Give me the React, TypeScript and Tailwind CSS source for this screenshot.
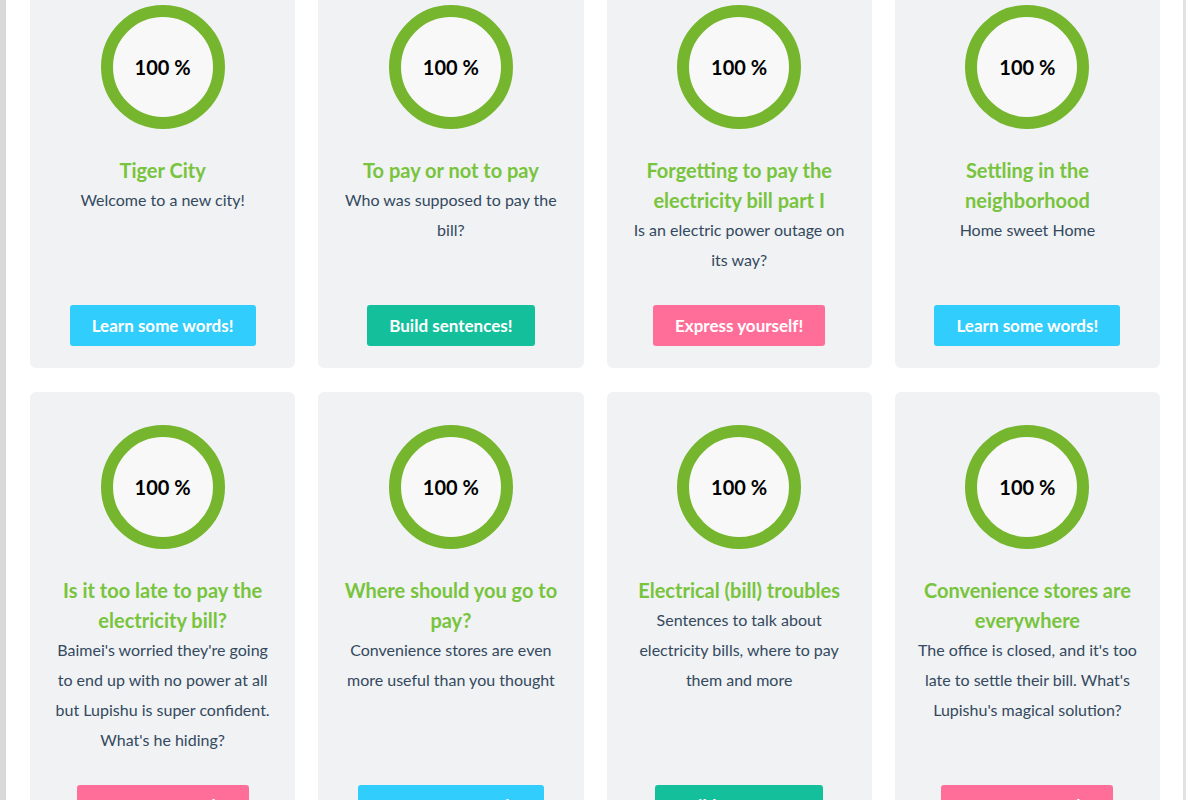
import React from 'react';

type Lesson = {
  title: string;
  text: string;
  action: 'learn' | 'build' | 'express';
};

const lessons: Lesson[] = [
  { title: 'Tiger City', text: 'Welcome to a new city!', action: 'learn' },
  { title: 'To pay or not to pay', text: 'Who was supposed to pay the bill?', action: 'build' },
  { title: 'Forgetting to pay the electricity bill part I', text: 'Is an electric power outage on its way?', action: 'express' },
  { title: 'Settling in the neighborhood', text: 'Home sweet Home', action: 'learn' },
  {
    title: 'Is it too late to pay the electricity bill?',
    text: "Baimei's worried they're going to end up with no power at all but Lupishu is super confident. What's he hiding?",
    action: 'express',
  },
  { title: 'Where should you go to pay?', text: 'Convenience stores are even more useful than you thought', action: 'learn' },
  { title: 'Electrical (bill) troubles', text: 'Sentences to talk about electricity bills, where to pay them and more', action: 'build' },
  {
    title: 'Convenience stores are everywhere',
    text: "The office is closed, and it's too late to settle their bill. What's Lupishu's magical solution?",
    action: 'express',
  },
];

const buttons = {
  learn: { label: 'Learn some words!', cls: 'bg-[#31cdfc]' },
  build: { label: 'Build sentences!', cls: 'bg-[#14bf9c]' },
  express: { label: 'Express yourself!', cls: 'bg-[#ff6e99]' },
};

const Progress = () => (
  <div className="w-[124px] h-[124px] shrink-0 rounded-full border-[12px] border-[#76b62e] bg-[#f8f8f8] flex items-center justify-center">
    <span className="text-[20px] font-bold text-black">100 %</span>
  </div>
);

const LessonCard = ({ lesson }: { lesson: Lesson }) => {
  const btn = buttons[lesson.action];
  return (
    <div className="h-full bg-[#f0f2f4] rounded-[6px] px-[18px] pt-[33px] pb-[22px] flex flex-col items-center text-center">
      <Progress />
      <h3 className="mt-[26px] text-[20px] leading-[30px] font-bold text-[#78c43c]">{lesson.title}</h3>
      <p className="text-[16px] leading-[30px] text-[#34495e]">{lesson.text}</p>
      <div className="mt-auto pt-[30px]">
        <button className={`${btn.cls} h-[41px] px-[22px] rounded-[3px] text-white text-[17px] font-bold`}>
          {btn.label}
        </button>
      </div>
    </div>
  );
};

export default function App() {
  return (
    <div className="flex min-h-[800px] bg-white overflow-hidden" style={{ fontFamily: 'Lato, "Open Sans", sans-serif' }}>
      <div className="w-[6px] shrink-0 bg-[#d9d9d9]" />
      <main className="flex-1 pl-[24px] pr-[23px]">
        <div className="mt-[-28px] grid grid-cols-4 gap-x-[23px] gap-y-[24px]">
          {lessons.map((l) => (
            <LessonCard key={l.title} lesson={l} />
          ))}
        </div>
      </main>
      <div className="w-[3px] shrink-0 bg-[#e2e2e2]" />
    </div>
  );
}
